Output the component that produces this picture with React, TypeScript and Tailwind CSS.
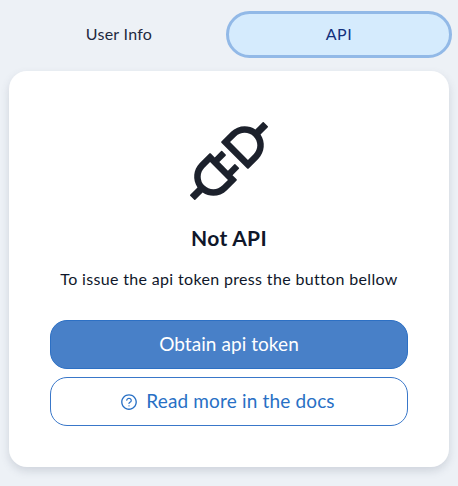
import { AiOutlineApi, AiOutlineQuestionCircle } from 'react-icons/ai';

export default function App() {
  return (
    <main className="flex h-[486px] w-[458px] flex-col overflow-hidden bg-[#edf1f6] pt-[11px] pr-[6px] pl-[9px] font-['Lato',sans-serif] text-[#0f172a]">
      <div role="tablist" className="flex h-[47px] shrink-0">
        <button role="tab" aria-selected="false" className="flex w-[217px] items-center justify-center pb-[2px] pl-[3px] text-[16px] tracking-[0.28px] text-[#1e293f]">
          User Info
        </button>
        <button role="tab" aria-selected="true" className="flex w-[226px] items-center justify-center rounded-[24px] border-[3px] border-[#92b9e7] bg-[#d5ebfd] pb-[2px] text-[16px] tracking-[0.6px] text-[#12307c]">
          API
        </button>
      </div>
      <section className="mt-[13px] flex h-[396px] w-[440px] shrink-0 flex-col items-center rounded-[18px] bg-white px-[41px] pt-[41px] shadow-[0_4px_8px_rgba(71,85,105,0.18)]">
        <AiOutlineApi className="size-[98px] shrink-0 text-[#1c212c]" />
        <h1 className="mt-[14px] text-[21px] leading-[28px] font-bold tracking-[0.3px]">Not API</h1>
        <p className="mt-[15px] text-[16px] leading-[24px] tracking-[0.34px] whitespace-nowrap">To issue the api token press the button bellow</p>
        <div className="mt-[29px] flex w-full flex-col gap-[8px] text-[19px]">
          <button className="flex h-[49px] items-center justify-center rounded-[17px] border border-[#2d70c4] bg-[#4880c8] pb-px tracking-[0.06px] text-white">
            Obtain api token
          </button>
          <button className="flex h-[49px] items-center justify-center gap-[8px] rounded-[17px] border border-[#3977c9] pr-[3px] text-[#2870c5]">
            <AiOutlineQuestionCircle className="size-[18px]" />
            <span className="tracking-[0.16px]">Read more in the docs</span>
          </button>
        </div>
      </section>
    </main>
  );
}
